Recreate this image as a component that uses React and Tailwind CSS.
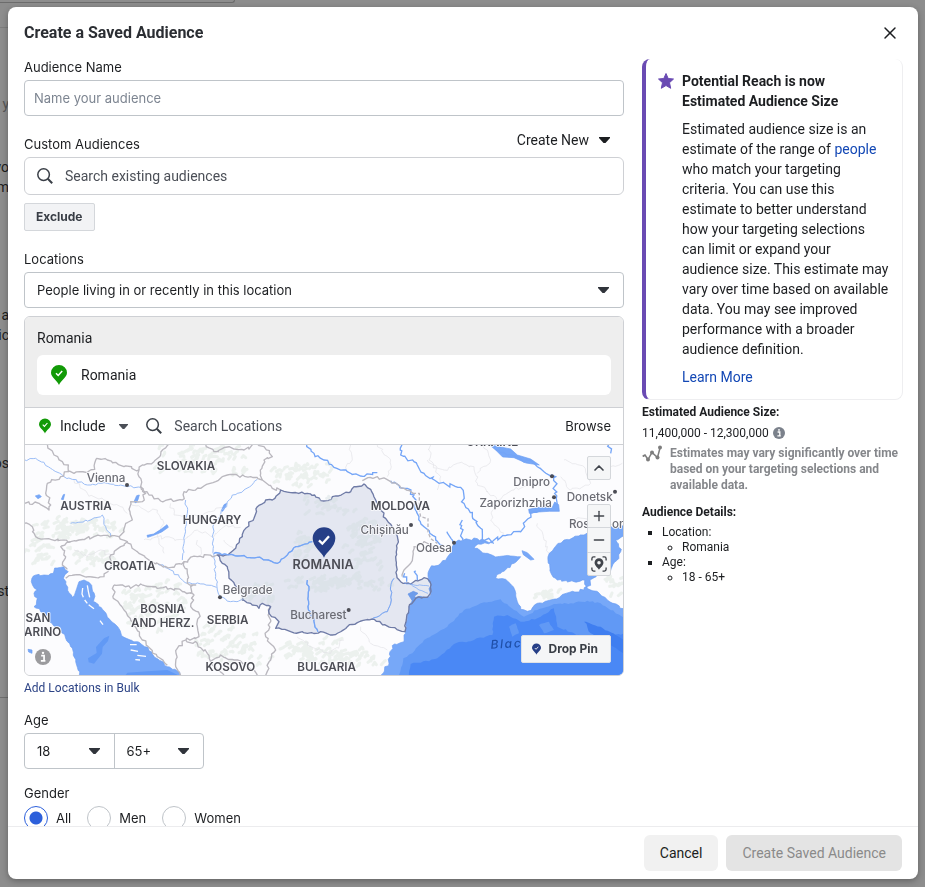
import React from "react";
import { LuX, LuChevronUp, LuPlus, LuMinus } from "react-icons/lu";

const CARD_TEXT =
  "who match your targeting criteria. You can use this estimate to better understand how your targeting selections can limit or expand your audience size. This estimate may vary over time based on available data. You may see improved performance with a broader audience definition.";

// Repeatable pseudo random numbers, so the map looks the same on every render
function makeRandom(seed) {
  let s = seed;
  return () => {
    s = (s * 16807) % 2147483647;
    return s / 2147483647 - 0.5;
  };
}

// Turns a coarse list of points into a rough, natural looking outline
function rough(text, amount = 9, closed = false) {
  const points = text.split(" ").map((p) => p.split(",").map(Number));
  if (closed) points.push(points[0]);
  const random = makeRandom(points.length * 977 + points[0][0] + 11);
  let d = `M${points[0][0]} ${points[0][1]}`;
  for (let i = 1; i < points.length; i++) {
    const [x0, y0] = points[i - 1];
    const [x1, y1] = points[i];
    const steps = Math.max(1, Math.round(Math.hypot(x1 - x0, y1 - y0) / 9));
    for (let k = 1; k < steps; k++) {
      const x = x0 + ((x1 - x0) * k) / steps + random() * amount;
      const y = y0 + ((y1 - y0) * k) / steps + random() * amount;
      d += `L${x.toFixed(1)} ${y.toFixed(1)}`;
    }
    d += `L${x1} ${y1}`;
  }
  return closed ? d + "Z" : d;
}

const SEAS = [
  // Adriatic
  "22,425 28,408 60,405 88,400 92,384 120,380 133,395 120,410 125,432 135,458 145,472 158,446 165,425 180,420 203,436 210,458 208,485 225,500 245,518 250,532 285,566 300,592 340,605 372,622 392,652 430,680 468,698 468,712 173,712 160,682 150,650 140,620 125,595 110,570 75,545 50,515 30,500 40,475 30,460 40,450",
  // Black Sea
  "1068,712 1095,670 1098,635 1112,612 1140,605 1143,573 1150,530 1155,500 1172,474 1218,470 1220,430 1212,408 1218,385 1250,370 1275,345 1290,310 1305,300 1360,296 1385,303 1410,310 1362,312 1350,325 1385,340 1420,350 1460,348 1490,350 1470,370 1430,400 1415,415 1445,418 1468,440 1475,465 1480,485 1490,508 1510,514 1540,490 1580,480 1620,462 1680,450 1688,438 1700,450 1722,456 1750,480 1800,506 1800,712",
  // Azov
  "1582,402 1572,350 1590,325 1620,300 1680,285 1700,270 1760,262 1800,258 1800,290 1775,300 1792,328 1780,360 1760,392 1720,402 1698,420 1700,436 1688,440 1682,420 1650,425 1600,420",
];

const BORDERS = [
  "70,12 90,45 115,65 133,75 133,95 150,100 190,98 212,88 218,55 250,60 300,80 345,90 345,110 350,140 365,160 355,185 320,185 318,215 325,240 305,250 300,275 285,290",
  "133,95 110,110 70,130 65,160 80,195 75,210 45,190 3,190",
  "345,90 355,75 390,65 410,45 435,12",
  "350,140 375,165 410,183 475,180 480,155 530,145 575,125 610,105 680,110 715,120 745,145 770,150",
  "545,12 570,35 620,22 660,30 700,12",
  "700,12 720,20 745,50 720,60 710,100 715,120",
  "3,250 25,260 35,290 80,298 140,305 165,300 210,290 285,290 310,305 290,320 260,345 265,370 240,410 195,410 150,405 125,415",
  "140,305 110,320 125,350 115,375 130,388",
  "310,305 340,335 375,360 410,375 450,382 480,365 520,350 580,345",
  "480,365 490,400 490,430 515,435 500,440 500,462",
  "270,435 290,435 320,445 350,432 395,440 440,445 480,455 510,465 500,500 525,520 520,560 525,590 485,600",
  "270,435 268,475 300,510 325,545 355,600 400,650 430,676",
  "485,600 520,610 550,640 560,665 600,706",
  "485,600 455,632 455,680 470,706",
  "560,665 590,645 630,660 690,690 700,706",
  "740,500 735,520 740,545 725,590 755,630 740,660 725,706",
  "1135,410 1145,385 1165,362 1170,320 1200,305 1240,325",
  "1015,122 1060,110 1100,125 1140,145 1170,162",
];

const RIVERS = [
  "3,60 35,55 80,85 120,110 190,135 250,130 310,140 350,142",
  "485,180 490,220 485,260 480,310 475,360",
  "700,118 660,150 625,165 600,205 570,250 565,290 570,345 575,400 580,450 590,470 620,485 660,478",
  "570,340 640,348 700,352 760,370 790,345 815,320 865,305",
  "850,420 855,450 852,500 870,545 882,575",
  "1045,537 1090,515 1102,480 1100,440 1110,415",
  "140,250 200,240 235,225 245,260 260,290",
  "400,370 440,390 490,430 540,432 578,442",
];

const BIG_RIVERS = [
  "848,12 870,40 900,60 930,82 970,95 1010,108 1060,98",
  "1135,12 1130,45 1170,65 1200,100 1245,130 1310,142 1320,190 1345,230 1370,265 1375,300",
  "1100,122 1150,145 1170,165 1185,230 1200,260 1235,300 1260,320",
  "1400,18 1450,45 1530,70 1560,95 1595,110 1592,160 1600,195",
  "1370,302 1410,300 1450,285 1490,275 1520,220 1550,212",
  "1315,240 1310,265 1315,300",
  "1270,275 1285,300 1290,312",
  "1142,400 1148,425",
  "1175,392 1180,420",
  "1755,12 1760,40",
];

const COUNTIES = [
  "320,190 370,215 400,210 420,250 400,290 420,340",
  "440,190 450,225 500,230 560,215 600,200",
  "360,300 400,290 480,300 520,270 570,290 600,260 650,262",
  "520,300 530,345",
  "600,300 630,330",
  "150,120 190,160 240,180 290,200 310,220",
  "150,330 190,350 230,330 270,350",
  "980,15 985,60 960,95",
  "1060,15 1100,60 1090,110",
  "1210,60 1260,90 1300,70 1350,80 1360,130 1420,180 1470,150 1520,130",
  "1220,15 1215,60 1250,110 1240,150",
  "1380,15 1400,60 1360,100",
  "1420,180 1400,240 1440,280",
  "1620,60 1680,80 1700,130 1640,150 1610,110",
  "1640,240 1700,230 1720,200",
  "1540,250 1560,300 1575,340",
  "1700,60 1760,80 1795,70",
  "820,590 860,620 920,640 960,600",
  "1010,560 1040,610 1090,630",
];

// Mountain areas: centre, radii and number of dabs
const HILLS = [
  [150, 265, 150, 34, 75],
  [40, 330, 45, 60, 25],
  [200, 360, 80, 40, 25],
  [530, 60, 150, 50, 60],
  [830, 110, 130, 40, 40],
  [400, 500, 110, 90, 60],
  [600, 620, 110, 70, 55],
  [330, 500, 60, 60, 20],
  [840, 640, 130, 50, 40],
  [960, 660, 120, 35, 35],
  [1570, 470, 50, 14, 14],
  [1770, 440, 30, 40, 12],
];

const ROMANIA_HILLS = [
  [930, 430, 180, 26, 70],
  [1010, 310, 60, 110, 55],
  [830, 330, 40, 60, 30],
  [700, 460, 50, 30, 18],
  [900, 200, 70, 30, 20],
];

function dabs(list) {
  const random = makeRandom(4242);
  let d = "";
  list.forEach(([cx, cy, rx, ry, count]) => {
    for (let i = 0; i < count; i++) {
      const x = cx + (random() + random()) * rx;
      const y = cy + (random() + random()) * ry;
      d += `M${x.toFixed(0)} ${y.toFixed(0)}l${(7 + random() * 10).toFixed(0)} ${(-6 + random() * 10).toFixed(0)}l${(3 + random() * 12).toFixed(0)} ${(2 + random() * 12).toFixed(0)}`;
    }
  });
  return d;
}

const ROMANIA =
  "580,345 605,345 635,325 655,290 665,265 690,235 700,200 725,180 745,180 770,150 800,158 850,160 872,165 890,182 912,182 925,170 975,158 990,140 1020,132 1040,148 1055,180 1085,235 1108,268 1122,300 1115,350 1118,405 1130,425 1160,432 1200,413 1218,425 1218,462 1210,472 1175,475 1155,500 1147,540 1143,575 1100,562 1045,537 1000,548 970,560 925,585 890,575 850,580 800,575 755,565 765,545 735,520 740,500 715,490 705,505 680,490 655,480 660,465 640,445 615,415 610,380 595,370";

const COUNTRIES = [
  ["SLOVAKIA", 486, 91],
  ["AUSTRIA", 186, 210],
  ["HUNGARY", 564, 252],
  ["CROATIA", 317, 389],
  ["BOSNIA", 416, 519],
  ["AND HERZ.", 416, 562],
  ["SERBIA", 611, 551],
  ["KOSOVO", 619, 694],
  ["BULGARIA", 908, 694],
  ["MOLDOVA", 1129, 210],
  ["SAN", 42, 547],
  ["ARINO", 56, 588],
  ["UKRAINE", 1405, 18],
];

const CITIES = [
  ["Vienna", 246, 127, 309, 135],
  ["Belgrade", 671, 463, 588, 472],
  ["Bucharest", 883, 536, 974, 510],
  ["Chișinău", 1082, 281, 1161, 255],
  ["Odesa", 1230, 336, 1290, 308],
  ["Dnipro", 1523, 137, 1584, 109],
  ["Zaporizhzhia", 1475, 200, 1590, 172],
  ["Donetsk", 1697, 183, 1773, 155],
];

function LocationMap() {
  return (
    <svg viewBox="3 15 1794 690" preserveAspectRatio="xMidYMid slice" className="block h-full w-full bg-[#fcfcfe]" role="img" aria-label="Map of Romania">
      <path d={dabs(HILLS)} fill="none" stroke="#e3ebe5" strokeWidth="9" strokeLinejoin="round" strokeLinecap="round" opacity="0.65" />
      <g fill="none" stroke="#e2e2e7" strokeWidth="2">
        {COUNTIES.map((b) => <path key={b} d={rough(b, 11)} />)}
      </g>

      {/* Water */}
      <g fill="#77a8f8" stroke="#6b9df2" strokeWidth="2">
        {SEAS.map((s) => <path key={s} d={rough(s, 8, true)} />)}
        <path d="M369 286l20-4 22-14 18-14 4 8-20 14-24 10-18 6z" />
        <path d="M330 185l8-18 8-2-4 14-6 10z" />
        <path d="M592 212l8-18 8-4-4 12-8 12z" />
        <path d="M34 168l12-4 6 6-10 6z" />
        <path d="M112 178l6-14 4-1-4 16z" />
        <path d="M1400 15l60 12 20 18 40 12 26 18-40-6-36-16-34-2z" />
        <path d="M1514 208l40-8 30 4 8-18 12 8 2 20-30 0-34 2-26 4z" />
        <path d="M1494 332l16 6 20 20-10 2-22-16z" />
        <path d="M1152 462l16-8 14 6-10 8 2 8-8 8z" />
        <path d="M12 628l12 2 0 10-10-4z" />
      </g>
      <path d={rough("1125,712 1138,655 1165,640 1200,600 1270,560 1320,510 1370,490 1430,478 1470,510 1500,530 1540,510 1590,492 1640,490 1690,482 1730,490 1800,532 1800,712", 5, true)} fill="#6199f5" />
      <path d={rough("1155,712 1160,672 1190,668 1240,655 1290,612 1350,600 1405,585 1410,530 1450,525 1490,545 1540,535 1590,505 1600,560 1650,580 1700,600 1800,580 1800,712", 5, true)} fill="#4a88f5" />
      <path d={rough("1455,560 1475,550 1485,580 1465,590", 4, true)} fill="#6199f5" />
      <path d={rough("1545,555 1575,545 1590,570 1560,580", 4, true)} fill="#6199f5" />
      <path d={rough("1680,545 1730,560 1800,600 1800,640 1750,610 1700,580", 5, true)} fill="#3f7ef0" />
      <path d="M192 655l26-16-2-18 24-26 16-8-4 16-16 18-2 20-24 30-16-4z" fill="#6199f5" />
      <path d="M300 712l10-14 60-4 60-4 30 14v10z" fill="#6199f5" />
      {/* Dalmatian islands */}
      <path d="M176 444l-2 18 4 10M190 436l3 18 4 18M182 480l8 10M194 494l16 12M228 542l9 12M318 614l20 0M320 630l22 4M340 646l26 3M334 659l14 1" stroke="#fcfcfe" strokeWidth="4" fill="none" />

      <g fill="none" stroke="#9bbdf6" strokeWidth="3">
        {RIVERS.map((r) => <path key={r} d={rough(r, 7)} />)}
      </g>
      <g fill="none" stroke="#74a5f7" strokeWidth="4">
        {BIG_RIVERS.map((r) => <path key={r} d={rough(r, 12)} />)}
      </g>
      <g fill="none" stroke="#bab8bf" strokeWidth="4" strokeLinejoin="round">
        {BORDERS.map((b) => <path key={b} d={rough(b, 10)} />)}
        <path d="M1166 160h20v50l4 20 22 6v40l8 20 20 14" strokeDasharray="10 6" />
      </g>

      {/* Selected country */}
      <path d={rough(ROMANIA, 7, true)} fill="#26408b" fillOpacity="0.11" stroke="#6f7ba6" strokeWidth="4" strokeLinejoin="round" />
      <path d={dabs(ROMANIA_HILLS)} fill="none" stroke="#d3dee0" strokeWidth="9" strokeLinejoin="round" strokeLinecap="round" opacity="0.45" />
      <g fill="none" stroke="#74a5f7" strokeWidth="4">
        <path d={rough(RIVERS[3], 7)} />
        <path d={rough(RIVERS[4], 7)} />
        <path d={rough(RIVERS[5], 5)} strokeWidth="2" />
        <path d={rough("1140,428 1170,435 1215,438", 4)} strokeWidth="2" />
        <path d={rough("1160,432 1185,450 1212,460", 4)} strokeWidth="2" />
      </g>

      <g className="font-['Inter',sans-serif]" textAnchor="middle" stroke="#fcfcfe" strokeWidth="5" strokeLinejoin="round" style={{ paintOrder: "stroke" }}>
        <g fontSize="35" fontWeight="600" fill="#4c4d55">
          {COUNTRIES.map(([name, x, y]) => <text key={name} x={x} y={y}>{name}</text>)}
        </g>
        <g fontSize="35" fontWeight="500" fill="#6b6c74">
          {CITIES.map(([name, x, y]) => <text key={name} x={x} y={y} stroke={name === "Bucharest" ? "#e3e6f0" : "#fcfcfe"}>{name}</text>)}
          <text x="1741" y="263">Rostov-on-D</text>
        </g>
        <text x="897" y="387" fontSize="38" fontWeight="600" fill="#4c4d55" stroke="#e3e6f0">ROMANIA</text>
        <text x="1400" y="626" textAnchor="start" fontSize="36" fontStyle="italic" fontWeight="500" letterSpacing="5" fill="#1f4fa8" stroke="none" transform="rotate(-3 1400 626)">Black Sea</text>
      </g>
      <g fill="#4c4d55">
        {CITIES.map(([name, , , x, y]) => <circle key={name} cx={x} cy={y} r="6" />)}
      </g>

      {/* Country pin */}
      <path d="M900 353c-6-16-34-32-34-58a34 33 0 0 1 68 0c0 26-28 42-34 58z" fill="#263f87" />
      <path d="M885 301l10 10 20-22" fill="none" stroke="#fff" strokeWidth="7" />
    </svg>
  );
}

function Pin({ className }) {
  return (
    <svg viewBox="0 0 16 20" className={className} aria-hidden="true">
      <path d="M8 20C6.500 16 0 12.500 0 7.800a8 7.800 0 0 1 16 0C16 12.500 9.500 16 8 20z" fill="currentColor" />
      <path d="M5 8.300l2.200 2.200 4-4.500" fill="none" stroke="#fff" strokeWidth="1.500" />
    </svg>
  );
}

function Caret({ className }) {
  return (
    <svg viewBox="0 0 11 6" className={className} aria-hidden="true">
      <path d="M0 0h11v1L6.500 6h-2L0 1z" fill="currentColor" />
    </svg>
  );
}

function SearchIcon({ className }) {
  return (
    <svg viewBox="0 0 16 16" className={className} aria-hidden="true">
      <circle cx="6.600" cy="6.600" r="5.800" fill="none" stroke="currentColor" strokeWidth="1.500" />
      <path d="M10.800 10.800l4.400 4.400" stroke="currentColor" strokeWidth="2" />
    </svg>
  );
}

function InfoDot({ className }) {
  return (
    <svg viewBox="0 0 12 12" className={className} aria-hidden="true">
      <circle cx="6" cy="6" r="6" fill="currentColor" />
      <path d="M4.600 5h2.200v3.800M4.400 8.900h3.400" stroke="#fff" strokeWidth="1.300" fill="none" />
      <circle cx="6" cy="2.900" r="0.900" fill="#fff" />
    </svg>
  );
}

function Select({ id, label, value, options, className }) {
  return (
    <div className={`relative ${className}`}>
      <select id={id} aria-label={label} defaultValue={value} className="h-full w-full appearance-none bg-transparent pl-3 pr-8 text-[13px] text-[#1c1e21] outline-none">
        {options.map((o) => <option key={o}>{o}</option>)}
      </select>
      <Caret className="pointer-events-none absolute right-3.5 top-[14px] h-1.5 w-[11px] text-[#30343b]" />
    </div>
  );
}

function Backdrop() {
  return (
    <div aria-hidden="true" className="h-screen overflow-hidden bg-[#8d8d8d] font-['Roboto',sans-serif] text-[14px] leading-5 text-[#1d1d1d]">
      <div className="h-[3px] w-[235px] rounded-br border-b border-r border-[#6c6c6c]" />
      <div className="flex w-[9px] flex-col items-end whitespace-nowrap">
        <div className="h-[25px] w-full border-b border-[#7d7d7d]" />
        <p className="mt-[66px] text-[#555]">y</p>
        <p className="mt-[43px]">yo</p>
        <p>m</p>
        <p className="mt-[108px]">e a</p>
        <p>ic</p>
        <p className="mt-[108px]">os</p>
        <p className="mt-[108px]">st</p>
        <div className="mt-[96px] w-full border-b border-[#6f6f6f]" />
      </div>
    </div>
  );
}

function AudienceForm() {
  return (
    <form className="min-w-0 flex-1 font-['Inter',sans-serif] text-[13px] leading-4 text-[#1c1e21]">
      <label htmlFor="name" className="mb-[5px] block">Audience Name</label>
      <input id="name" placeholder="Name your audience" className="block h-9 w-full rounded border border-[#bfc4c9] px-[9px] outline-none placeholder:text-[#7d8591]" />

      <div className="mb-[5px] mt-4 flex h-5 justify-between">
        <label htmlFor="custom" className="self-end">Custom Audiences</label>
        <button type="button" className="mr-3.5 flex items-center gap-2.5 self-start font-['Roboto',sans-serif] text-[14px]">
          Create New <Caret className="h-1.5 w-[11px]" />
        </button>
      </div>
      <div className="flex h-[38px] items-center gap-3 rounded-md border border-[#ced0d4] px-3 pb-px">
        <SearchIcon className="size-4 text-[#3a3f47]" />
        <input id="custom" placeholder="Search existing audiences" className="min-w-0 flex-1 font-['Roboto',sans-serif] text-[14px] outline-none placeholder:text-[#4b4f57]" />
      </div>
      <button type="button" className="mt-2 block h-7 rounded-xs border border-[#d4d7db] bg-[#f2f3f5] px-[11px] text-[12px] font-bold text-[#383d45]">Exclude</button>

      <label htmlFor="locations" className="mb-[5px] mt-5 block">Locations</label>
      <Select
        id="locations"
        value="People living in or recently in this location"
        options={["People living in or recently in this location", "People living in this location", "People recently in this location"]}
        className="h-9 rounded border border-[#bfc4c9]"
      />

      <div className="mt-2 overflow-hidden rounded-md border border-[#ced0d4]">
        <div className="border-b border-[#ced0d4] bg-[#eee] p-3 font-['Roboto',sans-serif] text-[14px] leading-[18px]">
          <p>Romania</p>
          <div className="mt-2 flex h-10 items-center gap-3.5 rounded-md bg-white px-3.5">
            <Pin className="h-5 w-4 text-[#129a07]" />
            Romania
          </div>
        </div>
        <div className="flex h-[37px] items-center border-b border-[#ced0d4] font-['Roboto',sans-serif] text-[14px]">
          <button type="button" className="ml-3.5 flex items-center">
            <Pin className="mr-[9px] h-4 w-3 text-[#129a07]" />
            Include
            <Caret className="ml-3.5 h-[5px] w-[9px] text-[#4b4f57]" />
          </button>
          <SearchIcon className="ml-[18px] mr-3 size-4 text-[#3a3f47]" />
          <input aria-label="Search Locations" placeholder="Search Locations" className="min-w-0 flex-1 outline-none placeholder:text-[#4b4f57]" />
          <button type="button" className="mr-3 font-['Inter',sans-serif] text-[13px]">Browse</button>
        </div>
        <div className="relative h-[230px]">
          <LocationMap />
          <div className="absolute right-3 top-[11px] flex w-6 flex-col text-[#40444b]">
            <button type="button" aria-label="Collapse map" className="mb-6 flex h-6 items-center justify-center rounded-xs border border-[#d4d7db] bg-[#f5f6f7]"><LuChevronUp className="size-4" strokeWidth={2.5} /></button>
            <button type="button" aria-label="Zoom in" className="flex h-6 items-center justify-center rounded-t-xs border border-[#d4d7db] bg-[#f5f6f7]"><LuPlus className="size-4" /></button>
            <button type="button" aria-label="Zoom out" className="flex h-6 items-center justify-center border-x border-[#d4d7db] bg-[#f5f6f7]"><LuMinus className="size-4" /></button>
            <button type="button" aria-label="Find my location" className="flex h-6 items-center justify-center rounded-b-xs border border-[#d4d7db] bg-[#f5f6f7]">
              <svg viewBox="0 0 18 18" className="size-4 shrink-0">
                <path d="M1 5V3a2 2 0 0 1 2-2h2M13 1h2a2 2 0 0 1 2 2v2M17 13v2a2 2 0 0 1-2 2h-2M5 17H3a2 2 0 0 1-2-2v-2" fill="none" stroke="currentColor" strokeWidth="1.500" />
                <path fillRule="evenodd" d="M9 15.500C8 13 4 11 4 7.500a5 5 0 0 1 10 0C14 11 10 13 9 15.500zM9 9.500a2 2 0 1 0 0-4 2 2 0 0 0 0 4z" fill="currentColor" />
              </svg>
            </button>
          </div>
          <button type="button" className="absolute bottom-3 right-3 flex h-7 items-center gap-[7px] rounded-xs border border-[#e0e2e5] bg-[#f5f6f7] pl-2.5 pr-3 text-[12px] font-bold text-[#383d45]">
            <Pin className="h-3 w-[9px] text-[#263f87]" />
            Drop Pin
          </button>
          <button type="button" aria-label="Map information" className="absolute bottom-2.5 left-2.5"><InfoDot className="size-4 text-[#9b9b9e]" /></button>
        </div>
      </div>
      <a href="#bulk" className="mt-1 block w-fit font-['Roboto',sans-serif] text-[12px] text-[#2d4486]">Add Locations in Bulk</a>

      <label htmlFor="age-min" className="mb-[5px] mt-4 block">Age</label>
      <div className="flex h-9 w-[180px] rounded border border-[#bfc4c9]">
        <Select id="age-min" value="18" options={["18", "21", "25", "35"]} className="flex-1 border-r border-[#bfc4c9]" />
        <Select id="age-max" label="Maximum age" value="65+" options={["35", "45", "55", "65+"]} className="flex-1" />
      </div>

      <fieldset className="mt-4">
        <legend className="mb-[5px]">Gender</legend>
        <div className="flex gap-4">
          {["All", "Men", "Women"].map((g) => (
            <label key={g} className="flex items-center gap-2">
              <input type="radio" name="gender" defaultChecked={g === "All"} className="size-6 appearance-none rounded-full border border-[#bfc4c9] bg-white checked:border-[#2d60db] checked:bg-[radial-gradient(circle,#2d60db_6px,#fff_7px)]" />
              {g}
            </label>
          ))}
        </div>
      </fieldset>
    </form>
  );
}

function AudienceSummary() {
  return (
    <aside className="w-[261px] shrink-0 text-[12px] leading-[18px] text-[#1c1e21]">
      <section className="flex gap-2 rounded-lg border-b border-l-4 border-r border-b-[#eeeef0] border-l-[#6a4bb3] border-r-[#eeeef0] py-3 pl-3 text-[14px] leading-5">
        <svg viewBox="0 0 16 16" className="mt-0.5 size-4 shrink-0 text-[#6a4bb3]" aria-hidden="true">
          <path d="M8 .5l2.200 5 5.300.5-4 3.700 1.200 5.600L8 12.500l-4.700 2.800 1.200-5.600-4-3.700 5.300-.5z" fill="currentColor" stroke="currentColor" strokeLinejoin="round" />
        </svg>
        <div className="min-w-0 flex-1 pr-[13px]">
          <h2 className="font-bold">Potential Reach is now Estimated Audience Size</h2>
          <p className="mt-2">
            Estimated audience size is an estimate of the range of <a href="#people" className="text-[#1348b5]">people</a> {CARD_TEXT}
          </p>
          <a href="#learn" className="mt-2 block text-[#1348b5]">Learn More</a>
        </div>
      </section>

      <h3 className="mt-[3px] font-bold">Estimated Audience Size:</h3>
      <p className="mt-[3px] flex items-center gap-1">
        11,400,000 - 12,300,000 <InfoDot className="size-3 text-[#7b818b]" />
      </p>
      <div className="mt-[3px] flex gap-2">
        <svg viewBox="0 0 20 18" className="h-[18px] w-5 shrink-0 text-[#7d7d7d]" aria-hidden="true">
          <path d="M1 11l2-1 3 4.500 4-7 5.500 5L18 3" fill="none" stroke="currentColor" strokeWidth="1.500" />
          <g fill="currentColor">
            <circle cx="1.500" cy="11" r="1" />
            <circle cx="6" cy="14.500" r="2" />
            <circle cx="10" cy="7.500" r="2" />
            <circle cx="15.500" cy="12.500" r="2" />
            <circle cx="18" cy="2.500" r="2" />
          </g>
        </svg>
        <p className="font-bold leading-4 text-[#85878b]">Estimates may vary significantly over time based on your targeting selections and available data.</p>
      </div>

      <h3 className="mt-2.5 font-bold">Audience Details:</h3>
      <ul className="mt-1 list-[square] pl-5 leading-[15px]">
        <li>Location:
          <ul className="list-[circle] pl-5"><li>Romania</li></ul>
        </li>
        <li>Age:
          <ul className="list-[circle] pl-5"><li>18 - 65+</li></ul>
        </li>
      </ul>
    </aside>
  );
}

export default function App() {
  return (
    <>
      <Backdrop />
      <div role="dialog" aria-labelledby="title" className="fixed bottom-2 left-2 right-[7px] top-[7px] flex flex-col overflow-hidden rounded-lg bg-white font-['Roboto',sans-serif] shadow-[0_2px_6px_rgba(0,0,0,0.3)]">
        <header className="flex h-[52px] shrink-0 items-center justify-between pl-4 pr-[18px]">
          <h1 id="title" className="text-[16px] font-bold text-[#2b2e33]">Create a Saved Audience</h1>
          <button type="button" aria-label="Close" className="text-[#1c1e21]"><LuX className="size-5" strokeWidth={1.75} /></button>
        </header>
        <main className="flex min-h-0 flex-1 gap-[18px] overflow-hidden pl-4 pr-[15px]">
          <AudienceForm />
          <AudienceSummary />
        </main>
        <footer className="flex shrink-0 justify-end gap-2 border-t border-[#ececee] px-4 py-2 text-[14px]">
          <button type="button" className="h-9 rounded-md bg-[#f1f1f1] px-4 text-[#1c1e21]">Cancel</button>
          <button type="button" disabled className="h-9 rounded-md bg-[#e4e4e4] px-4 text-[#8a8a8a]">Create Saved Audience</button>
        </footer>
      </div>
    </>
  );
}
